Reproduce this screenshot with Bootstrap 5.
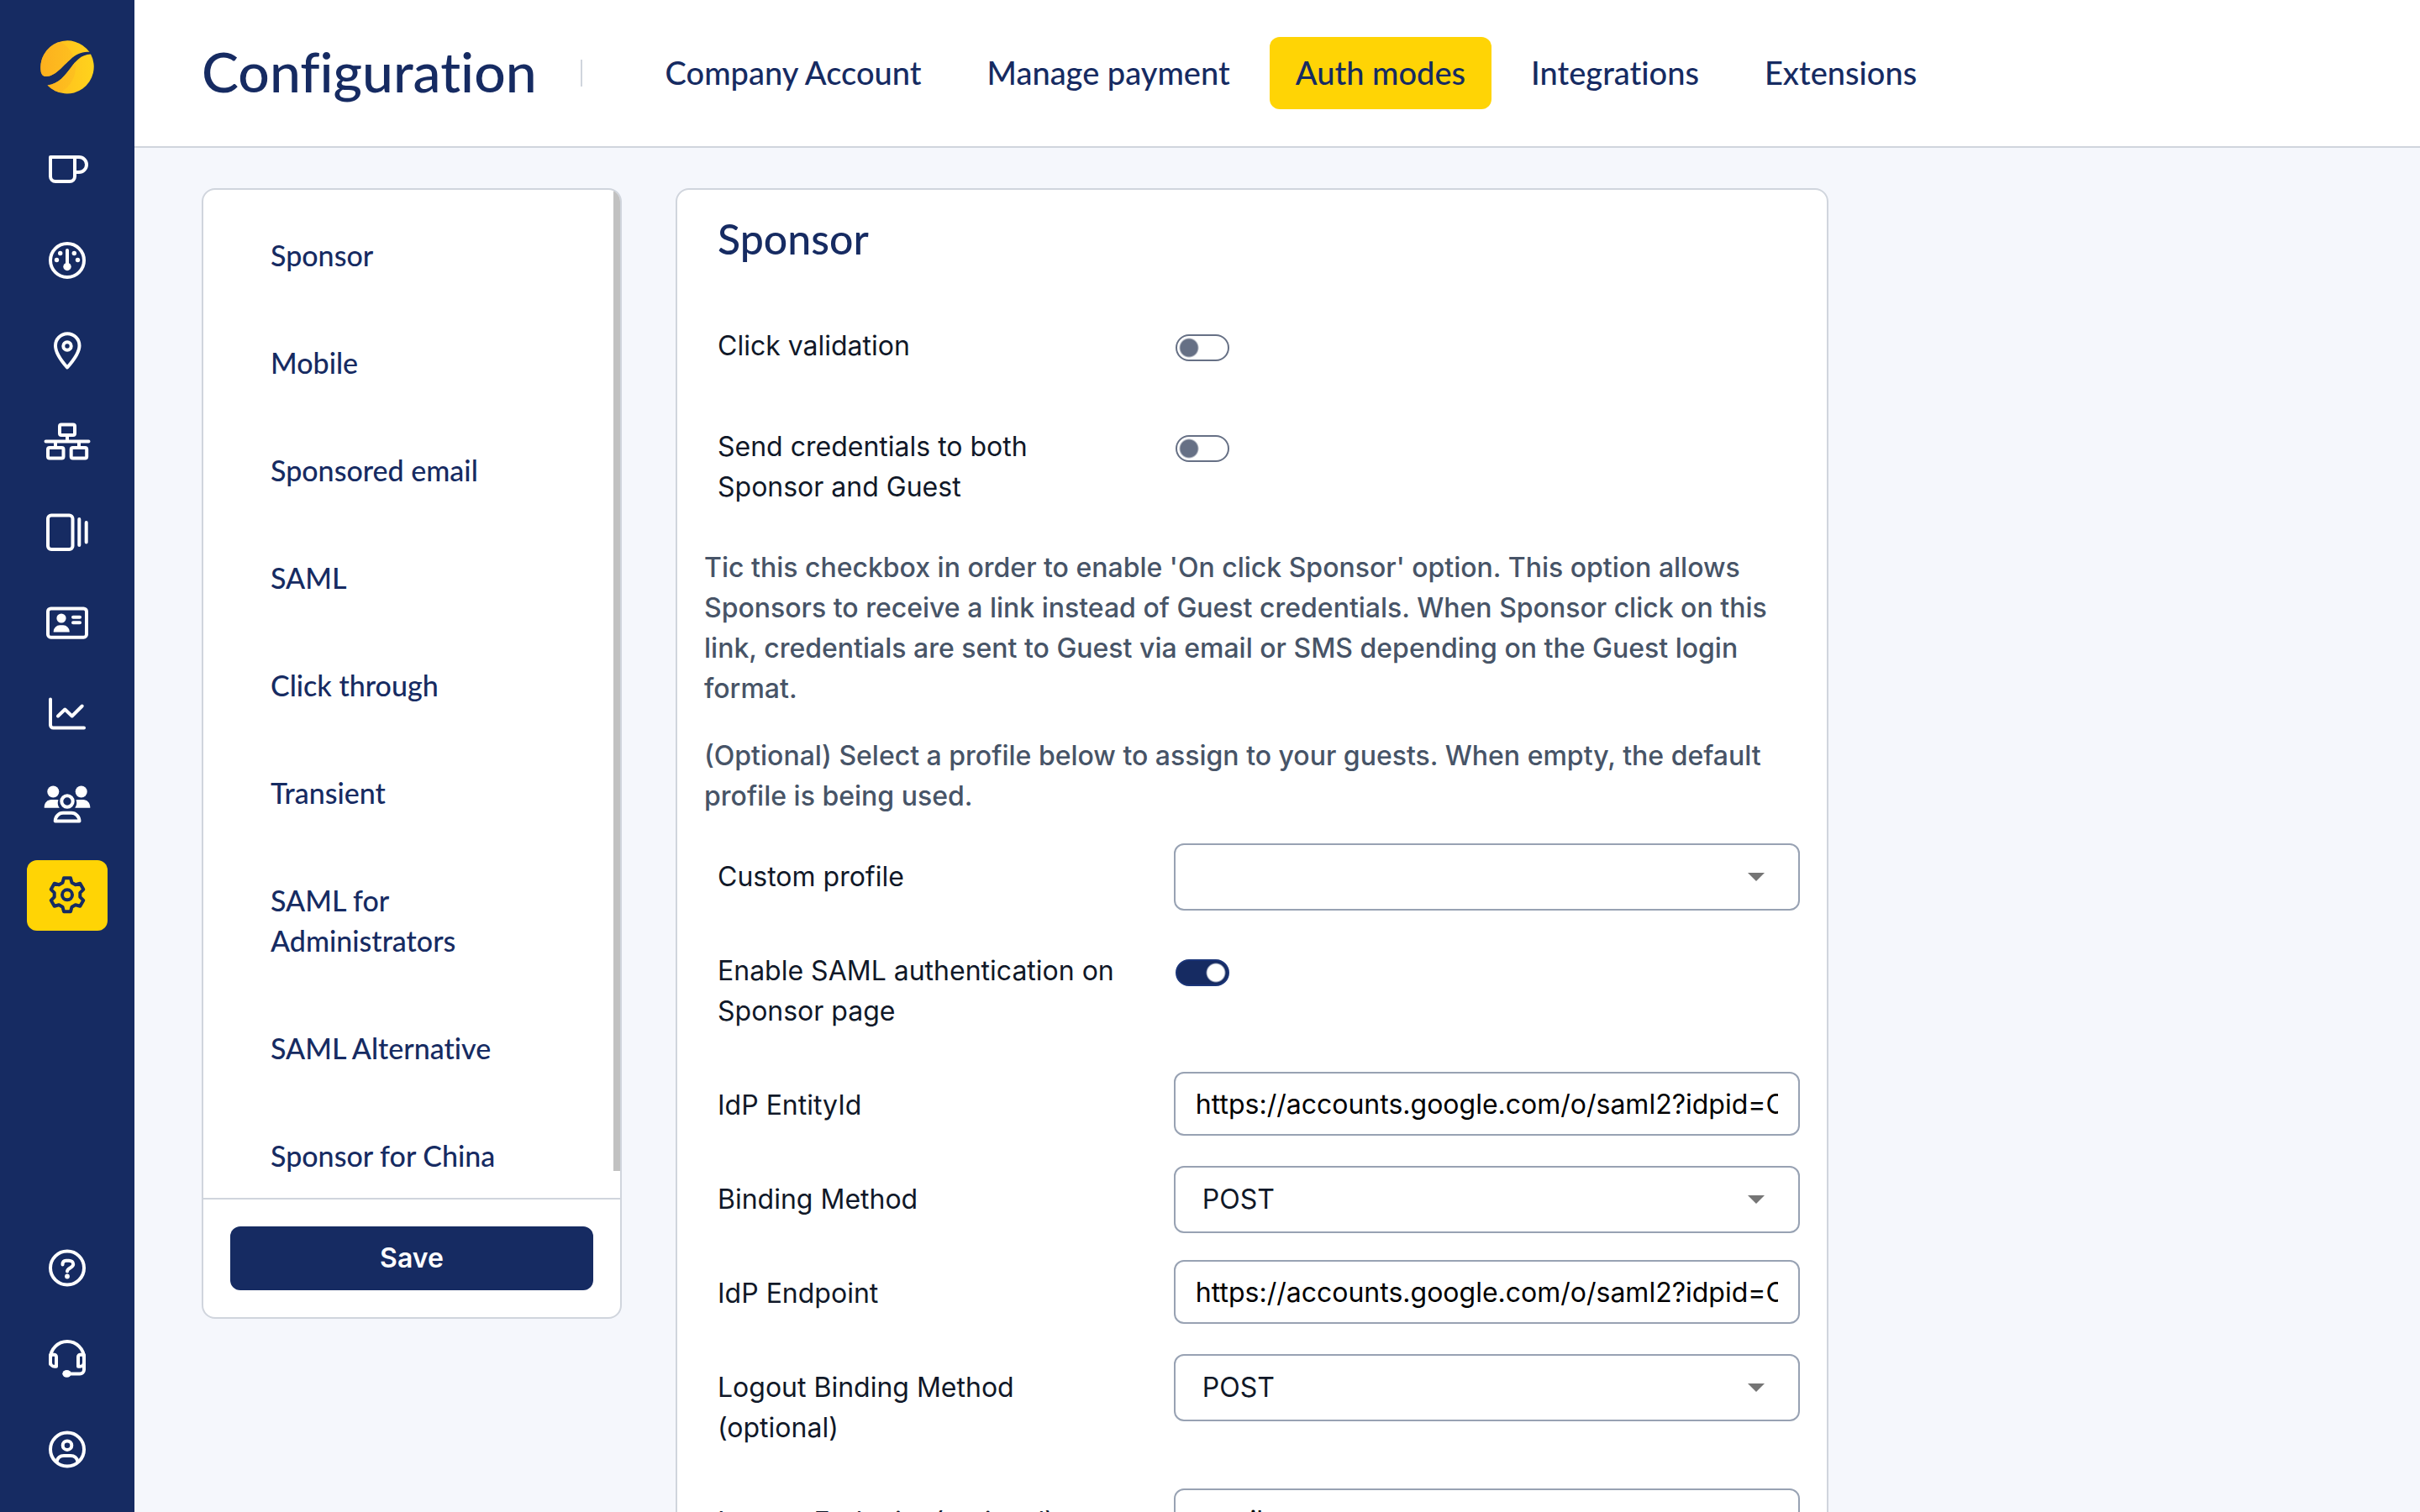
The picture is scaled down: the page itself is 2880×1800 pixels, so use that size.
<!DOCTYPE html>
<html lang="en">
<head>
<meta charset="utf-8">
<meta name="viewport" content="width=device-width, initial-scale=1">
<title>Configuration</title>
<link rel="stylesheet" href="https://cdn.jsdelivr.net/npm/bootstrap@5.3.0/dist/css/bootstrap.min.css">
<style>
:root{--navy:#162b62;--sun:#ffd405;--line:#d0d5dd;--field:#98a2b3;--ink:#101828;--muted:#475467;--slate:#667085}
body{font-family:Inter,"Liberation Sans",sans-serif;font-size:32px;line-height:48px;color:var(--ink);background:#f5f7fc}
.face{font-family:Lato,"Open Sans",sans-serif;color:var(--navy);font-weight:500;font-variant-ligatures:none}
.rail{width:160px;background:var(--navy);padding:48px 32px 32px}
.rail .brand{margin-bottom:48px}
.rail ul{gap:24px}
.rail-link{width:96px;height:84px;border-radius:12px;color:#fff}
.rail-link.current{background:var(--sun);color:var(--navy)}
.rail-link svg{fill:none;stroke:currentColor;stroke-width:4;stroke-linecap:round;stroke-linejoin:round}
.rail-link .solid{fill:currentColor;stroke:none}
.topbar{height:176px;border-bottom:2px solid var(--line);padding:0 80px}
.topbar h1{font-size:66px;line-height:80px;padding-bottom:4px}
.rule{width:2px;height:32px;background:var(--line);margin:0 68px 0 52px}
.tab-link{font-size:38px;line-height:48px;padding:18px 31px 20px;border-radius:12px}
.tab-link.current{background:var(--sun)}
.work{padding:48px 80px;gap:64px}
.panel{background:#fff;border:2px solid var(--line);border-radius:16px}
.menu-panel{width:500px;overflow:hidden}
.menu-list{height:1200px;padding:14px 0;overflow:hidden}
.menu-link{font-size:34px;padding:40px 80px}
.thumb{top:0;right:0;width:8px;height:1168px;background:#c1c1c1}
.menu-foot{border-top:2px solid var(--line);padding:32px}
.btn-save{--bs-btn-color:#fff;--bs-btn-bg:var(--navy);--bs-btn-hover-bg:#203a80;--bs-btn-hover-color:#fff;font-size:32px;line-height:48px;font-weight:600;padding:14px;border:0;border-radius:12px}
.form-panel{width:100%;max-width:1372px;padding:30px 32px 32px}
.form-panel h2{font-size:50px;line-height:56px;padding:0 16px;margin:0 0 44px}
.field-row{display:grid;grid-template-columns:3fr 4fr;padding:16px 0}
.field-row label{padding:16px 48px 16px 16px}
.hint{font-weight:500;color:var(--muted);margin:16px 0 32px}
.hint + .hint{margin-bottom:16px}
.field{font-size:32px;line-height:48px;border:2px solid var(--field);border-radius:12px;background-color:#fff}
input.field{color:#000;height:76px;padding:12px 24px}
select.field{color:var(--ink);height:80px;padding:14px 64px 14px 32px;background-image:linear-gradient(#0000,#0000)}
.caret{right:42px;top:35px;width:20px;height:10px;background:#757575;clip-path:polygon(0 0,100% 0,50% 100%);pointer-events:none}
.toggle{appearance:none;display:block;width:64px;height:32px;margin:26px 2px 0;border:2px solid var(--slate);border-radius:16px;background:radial-gradient(circle at 14px 14px,var(--slate) 10px,#fff 12px)}
.toggle:checked{border-color:#1b3578;background:radial-gradient(circle at 46px 14px,#fff 10px,var(--navy) 12px)}
</style>
</head>
<body>
<div class="d-flex vh-100 overflow-hidden">
  <nav class="rail d-flex flex-column align-items-center flex-shrink-0" aria-label="Main">
    <a class="brand d-block lh-1" href="#" aria-label="Home">
      <svg width="64" height="64" viewBox="0 0 64 64" class="d-block">
        <defs>
          <linearGradient id="g1" x1="0" x2="1"><stop offset="0" stop-color="#ffb81f"/><stop offset="1" stop-color="#ffd31c"/></linearGradient>
          <linearGradient id="g2" x1="0" x2="1"><stop offset="0" stop-color="#fba31c"/><stop offset="1" stop-color="#fdbe20"/></linearGradient>
          <clipPath id="bean"><path d="M.8 38A32 32 0 0 1 58.500 14C50 13 42 17 36 22.500C27 30 18 43 7 43 3.500 43 1.500 41 .8 38ZM8.500 53.500C22 52 30 41 36 33 42 25 48 17 60 16.500A32 32 0 0 1 8.500 53.500Z"/></clipPath>
        </defs>
        <g clip-path="url(#bean)"><rect width="64" height="64" fill="url(#g1)"/><circle cx="8" cy="32" r="34" fill="url(#g2)" opacity=".75"/></g>
      </svg>
    </a>
    <ul class="list-unstyled d-flex flex-column m-0">
      <li><a class="rail-link d-flex align-items-center justify-content-center" href="#" aria-label="Welcome"><svg width="56" height="56" viewBox="0 0 56 56"><path d="M8 13H42a9 9 0 0 1 0 18H37M8 13V36a6 6 0 0 0 6 6H31a6 6 0 0 0 6-6V13" stroke-linejoin="miter"/></svg></a></li>
      <li><a class="rail-link d-flex align-items-center justify-content-center" href="#" aria-label="Dashboard"><svg width="56" height="56" viewBox="0 0 56 56"><circle cx="28" cy="28" r="20"/><path d="M28 16V34"/><g class="solid"><circle cx="28" cy="35.500" r="4.700"/><circle cx="15.500" cy="27.500" r="2.700"/><circle cx="19.700" cy="19.500" r="2.700"/><circle cx="36.300" cy="19.500" r="2.700"/><circle cx="40.500" cy="27.500" r="2.700"/></g></svg></a></li>
      <li><a class="rail-link d-flex align-items-center justify-content-center" href="#" aria-label="Locations"><svg width="56" height="56" viewBox="0 0 56 56"><path d="M28 47.500C24 43 14 31 14 21.500a14.200 14.200 0 0 1 28.500 0C42.500 31 32 43 28 47.500Z"/><circle cx="28" cy="22" r="4.700"/></svg></a></li>
      <li><a class="rail-link d-flex align-items-center justify-content-center" href="#" aria-label="Network"><svg width="56" height="56" viewBox="0 0 56 56"><path d="M2.500 27.500H53.500M28 20v7M14 28v7M42 28v7"/><rect x="19" y="7.500" width="18" height="12.500" rx="2"/><rect x="5" y="35" width="18.500" height="12.500" rx="2"/><rect x="32.700" y="35" width="18.500" height="12.500" rx="2"/></svg></a></li>
      <li><a class="rail-link d-flex align-items-center justify-content-center" href="#" aria-label="Portals"><svg width="56" height="56" viewBox="0 0 56 56"><rect x="5" y="7.500" width="29.500" height="40.500" rx="4"/><path d="M42.300 12V43M50.700 16V39.500"/></svg></a></li>
      <li><a class="rail-link d-flex align-items-center justify-content-center" href="#" aria-label="Profiles"><svg width="56" height="56" viewBox="0 0 56 56"><rect x="5" y="10.500" width="46" height="34.200" rx="3.500"/><path d="M35 20.700H43M35 27.300H43"/><g class="solid"><circle cx="21" cy="22" r="5.600"/><path d="M11.700 38.500V37.500a7.500 7.500 0 0 1 7.500-7.200h4a7.500 7.500 0 0 1 7.500 7.200V38.500Z"/></g></svg></a></li>
      <li><a class="rail-link d-flex align-items-center justify-content-center" href="#" aria-label="Analytics"><svg width="56" height="56" viewBox="0 0 56 56"><path d="M8 10.500V41a3.500 3.500 0 0 0 3.500 3.500H48M17 30.500 25.300 22.500 33.700 30.500 45.700 18.500"/></svg></a></li>
      <li><a class="rail-link d-flex align-items-center justify-content-center" href="#" aria-label="Users"><svg width="56" height="56" viewBox="0 0 56 56"><circle cx="28" cy="24" r="6.700"/><path d="M13.700 47.600C13.700 42 18 37.700 23 37.700H33C38 37.700 42.500 42 42.500 47.600Z"/><g class="solid"><circle cx="11.300" cy="12.500" r="7"/><circle cx="44.700" cy="12.500" r="7"/><path d="M.7 31.800V30.500C1 25.500 4.500 22 9 22H15.500Q17 22 17.500 22.300C16 26 17 29.500 18.800 31.800ZM55.300 31.800V30.500C55 25.500 51.500 22 47 22H40.500Q39 22 38.500 22.300C40 26 39 29.500 37.200 31.800Z"/></g></svg></a></li>
      <li><a class="rail-link current d-flex align-items-center justify-content-center" href="#" aria-label="Configuration" aria-current="page"><svg width="56" height="56" viewBox="0 0 56 56"><g transform="translate(28 27.300)"><circle r="6"/><path d="M-4-20H4L5.500-14.500 9.800-12 15.300-13.500 19.300-6.500 15.300-2.500V2.500L19.300 6.500 15.300 13.500 9.800 12 5.500 14.500 4 20H-4L-5.500 14.500-9.800 12-15.300 13.500-19.300 6.500-15.300 2.500V-2.500L-19.300-6.500-15.300-13.500-9.800-12-5.500-14.500Z"/></g></svg></a></li>
    </ul>
    <ul class="list-unstyled d-flex flex-column m-0 mt-auto">
      <li><a class="rail-link d-flex align-items-center justify-content-center" href="#" aria-label="Help"><svg width="56" height="56" viewBox="0 0 56 56"><circle cx="28" cy="27.500" r="20"/><path d="M22.500 23.500C22.500 20.500 24 18.700 26.500 18.700H30C33 18.700 35.200 20.500 35.200 23 35.200 27.500 28 27.500 28 31.500"/><circle class="solid" cx="28" cy="37.500" r="2.900"/></svg></a></li>
      <li><a class="rail-link d-flex align-items-center justify-content-center" href="#" aria-label="Support"><svg width="56" height="56" viewBox="0 0 56 56"><path d="M8 34V27a20 20 0 0 1 40 0V40.500a5 5 0 0 1-5 5H28M8 22.700H12.500a2.500 2.500 0 0 1 2.500 2.500V36.800H13A5 5 0 0 1 8 32ZM48 22.700H43.500a2.500 2.500 0 0 0-2.500 2.500V36.800H43A5 5 0 0 0 48 32Z"/><ellipse class="solid" cx="27.500" cy="45.300" rx="5.200" ry="4.400"/></svg></a></li>
      <li><a class="rail-link d-flex align-items-center justify-content-center" href="#" aria-label="Profile"><svg width="56" height="56" viewBox="0 0 56 56"><circle cx="28" cy="27.500" r="20"/><circle cx="28" cy="22.700" r="5.300"/><path d="M15.500 42C16.500 37.500 19.500 35 24 35H32C36.500 35 39.500 37.500 40.500 42"/></svg></a></li>
    </ul>
  </nav>

  <div class="flex-grow-1 d-flex flex-column overflow-hidden">
    <header class="topbar bg-white d-flex align-items-center flex-shrink-0">
      <h1 class="face m-0">Configuration</h1>
      <div class="rule"></div>
      <nav class="nav flex-nowrap gap-3" aria-label="Configuration sections">
        <a class="tab-link face text-decoration-none" href="#">Company Account</a>
        <a class="tab-link face text-decoration-none" href="#">Manage payment</a>
        <a class="tab-link face text-decoration-none current" href="#" aria-current="page">Auth modes</a>
        <a class="tab-link face text-decoration-none" href="#">Integrations</a>
        <a class="tab-link face text-decoration-none" href="#">Extensions</a>
      </nav>
    </header>

    <main class="work d-flex align-items-start">
      <aside class="panel menu-panel flex-shrink-0">
        <div class="position-relative">
          <nav class="menu-list d-flex flex-column" aria-label="Auth modes">
            <a class="menu-link face text-decoration-none" href="#">Sponsor</a>
            <a class="menu-link face text-decoration-none" href="#">Mobile</a>
            <a class="menu-link face text-decoration-none" href="#">Sponsored email</a>
            <a class="menu-link face text-decoration-none" href="#">SAML</a>
            <a class="menu-link face text-decoration-none" href="#">Click through</a>
            <a class="menu-link face text-decoration-none" href="#">Transient</a>
            <a class="menu-link face text-decoration-none" href="#">SAML for Administrators</a>
            <a class="menu-link face text-decoration-none" href="#">SAML Alternative</a>
            <a class="menu-link face text-decoration-none" href="#">Sponsor for China</a>
          </nav>
          <div class="thumb position-absolute"></div>
        </div>
        <div class="menu-foot"><button type="submit" form="sponsor" class="btn btn-save w-100">Save</button></div>
      </aside>

      <form id="sponsor" class="panel form-panel">
        <h2 class="face">Sponsor</h2>
        <div class="field-row mb-2"><label for="click">Click validation</label><div><input class="toggle" type="checkbox" role="switch" id="click"></div></div>
        <div class="field-row"><label for="both">Send credentials to both Sponsor and Guest</label><div><input class="toggle" type="checkbox" role="switch" id="both"></div></div>
        <p class="hint">Tic this checkbox in order to enable 'On click Sponsor' option. This option allows Sponsors to receive a link instead of Guest credentials. When Sponsor click on this link, credentials are sent to Guest via email or SMS depending on the Guest login format.</p>
        <p class="hint">(Optional) Select a profile below to assign to your guests. When empty, the default profile is being used.</p>
        <div class="field-row"><label for="profile">Custom profile</label><div class="position-relative"><select class="form-select field" id="profile"><option></option></select><span class="caret position-absolute"></span></div></div>
        <div class="field-row"><label for="saml">Enable SAML authentication on Sponsor page</label><div><input class="toggle" type="checkbox" role="switch" id="saml" checked></div></div>
        <div class="field-row"><label for="entity">IdP EntityId</label><div><input class="form-control field" type="text" id="entity" value="https://accounts.google.com/o/saml2?idpid=C0"></div></div>
        <div class="field-row"><label for="bind">Binding Method</label><div class="position-relative"><select class="form-select field" id="bind"><option>POST</option></select><span class="caret position-absolute"></span></div></div>
        <div class="field-row"><label for="endpoint">IdP Endpoint</label><div><input class="form-control field" type="text" id="endpoint" value="https://accounts.google.com/o/saml2?idpid=C0"></div></div>
        <div class="field-row"><label for="logbind">Logout Binding Method (optional)</label><div class="position-relative"><select class="form-select field" id="logbind"><option>POST</option></select><span class="caret position-absolute"></span></div></div>
        <div class="field-row"><label for="logend">Logout Endpoint (optional)</label><div><input class="form-control field" type="text" id="logend" value="email"></div></div>
      </form>
    </main>
  </div>
</div>
<script src="https://cdn.jsdelivr.net/npm/bootstrap@5.3.0/dist/js/bootstrap.bundle.min.js"></script>
</body>
</html>
